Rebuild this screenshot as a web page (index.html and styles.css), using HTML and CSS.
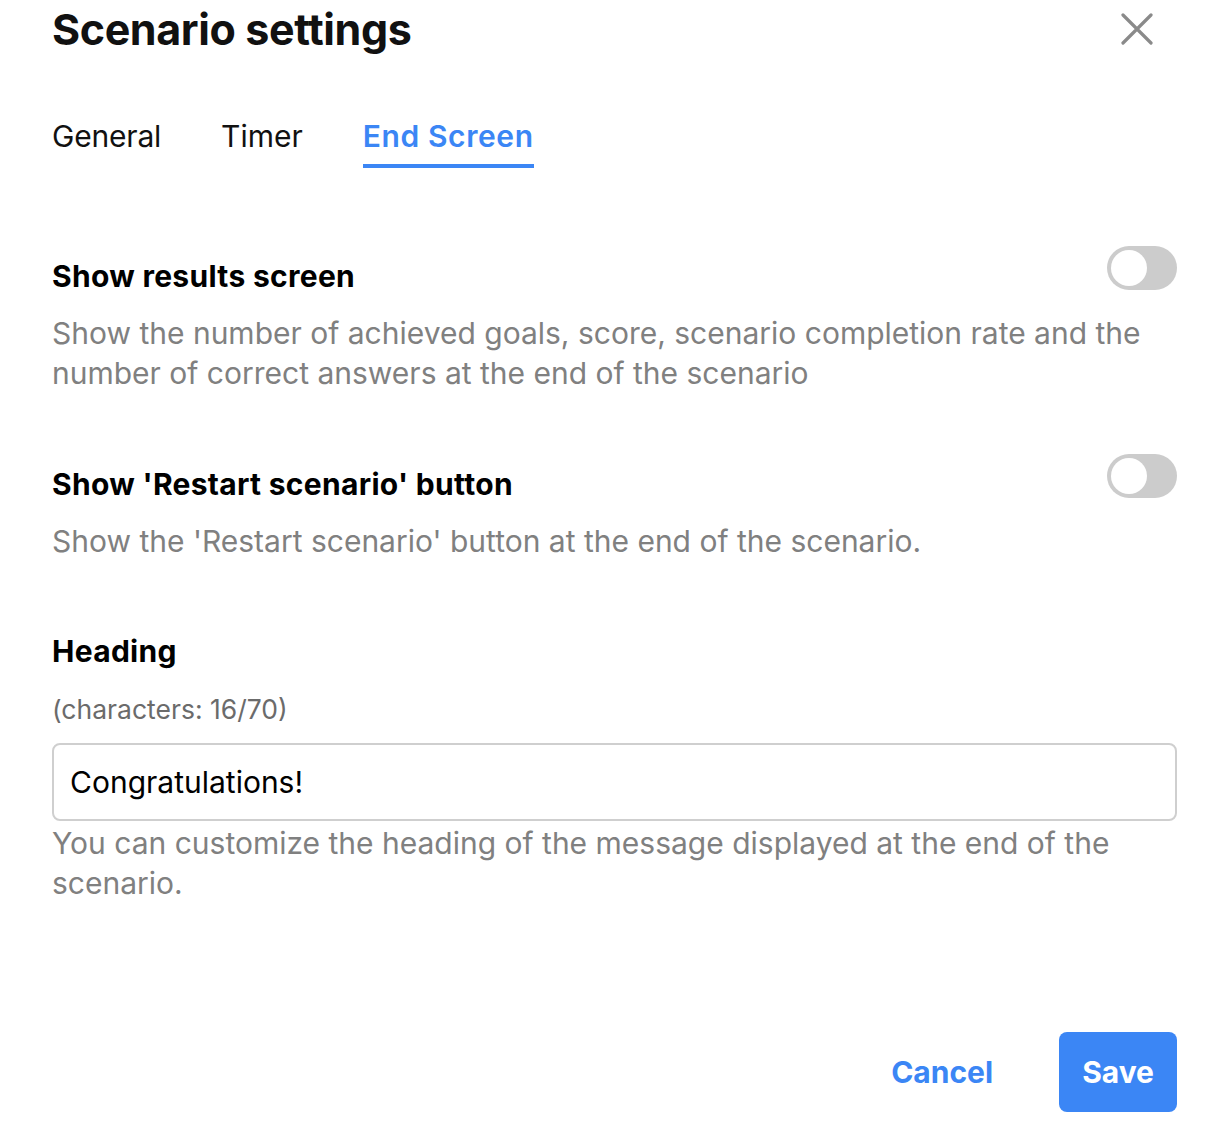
FILE: index.html
```html
<!DOCTYPE html>
<html lang="en">
<head>
  <meta charset="UTF-8">
  <meta name="viewport" content="width=device-width, initial-scale=1.0">
  <title>Scenario settings</title>
  <link rel="stylesheet" href="styles.css">
</head>
<body>
  <div class="dialog">
    <div class="header">
      <h1>Scenario settings</h1>
      <button class="close" aria-label="Close">
        <svg width="32" height="32" viewBox="0 0 32 32"><path d="M2 2 L30 30 M30 2 L2 30" stroke="#8a8a8a" stroke-width="3.2" stroke-linecap="round"/></svg>
      </button>
    </div>

    <div class="tabs">
      <span class="tab">General</span>
      <span class="tab">Timer</span>
      <span class="tab active">End Screen</span>
    </div>

    <div class="option">
      <div class="option-row">
        <h2>Show results screen</h2>
        <span class="toggle"></span>
      </div>
      <p class="hint">Show the number of achieved goals, score, scenario completion rate and the number of correct answers at the end of the scenario</p>
    </div>

    <div class="option">
      <div class="option-row">
        <h2>Show 'Restart scenario' button</h2>
        <span class="toggle"></span>
      </div>
      <p class="hint">Show the 'Restart scenario' button at the end of the scenario.</p>
    </div>

    <div class="field">
      <h2>Heading</h2>
      <div class="counter">(characters: 16/70)</div>
      <input type="text" value="Congratulations!">
      <p class="hint">You can customize the heading of the message displayed at the end of the scenario.</p>
    </div>

    <div class="actions">
      <button class="cancel">Cancel</button>
      <button class="save">Save</button>
    </div>
  </div>
</body>
</html>
```

FILE: styles.css
```css
body {
  font-family: Inter, "Noto Sans", sans-serif;
  margin: 0;
  background: #fff;
  color: #111;
}
.dialog {
  padding: 0 53px 0 52px;
}
.header {
  display: flex;
  justify-content: space-between;
  align-items: flex-start;
  height: 60px;
}
h1 {
  margin: 0;
  font-size: 43px;
  line-height: 58px;
  font-weight: 700;
  letter-spacing: -0.4px;
}
.close {
  background: none;
  border: none;
  padding: 0;
  margin: 13px 24px 0 0;
  cursor: pointer;
}
.tabs {
  display: flex;
  gap: 60px;
  margin-top: 56px;
}
.tab {
  font-size: 30px;
  line-height: 40px;
  padding-bottom: 8px;
  border-bottom: 4px solid transparent;
}
.tab:first-child {
  letter-spacing: -0.2px;
}
.tab.active {
  color: #3b86f5;
  font-weight: 600;
  letter-spacing: 0.6px;
  border-bottom-color: #3b86f5;
}
.option {
  margin-top: 78px;
}
.option + .option {
  margin-top: 61px;
}
.option-row {
  display: flex;
  justify-content: space-between;
  align-items: flex-start;
  margin-bottom: -1px;
}
.option-row h2 {
  margin-top: 12px;
}
h2 {
  margin: 0;
  font-size: 30px;
  font-weight: 700;
  line-height: 36px;
  letter-spacing: 0.3px;
  color: #000;
}
.toggle {
  width: 70px;
  height: 44px;
  border-radius: 22px;
  background: #cccccc;
  position: relative;
}
.toggle::after {
  content: "";
  position: absolute;
  left: 4px;
  top: 4px;
  width: 36px;
  height: 36px;
  border-radius: 50%;
  background: #fff;
}
.hint {
  margin: 20px 0 0;
  font-size: 30px;
  line-height: 40px;
  color: #808080;
}
.field {
  margin-top: 72px;
}
.counter {
  margin-top: 23px;
  font-size: 26.5px;
  line-height: 34px;
  color: #6b6b6b;
}
.field input {
  display: block;
  box-sizing: border-box;
  width: 100%;
  height: 78px;
  margin-top: 17px;
  padding: 0 16px;
  border: 2px solid #cfcfcf;
  border-radius: 8px;
  font-family: inherit;
  font-size: 30px;
  color: #000;
}
.field .hint {
  margin-top: 2px;
}
.actions {
  display: flex;
  justify-content: flex-end;
  align-items: center;
  gap: 66px;
  margin-top: 129px;
}
.actions button {
  font-family: inherit;
  font-size: 30px;
  font-weight: 700;
  border: none;
  cursor: pointer;
}
.cancel {
  background: none;
  color: #3b86f5;
  padding: 0;
}
.save {
  background: #3b86f5;
  color: #fff;
  height: 80px;
  padding: 0 23px;
  border-radius: 8px;
}
```
